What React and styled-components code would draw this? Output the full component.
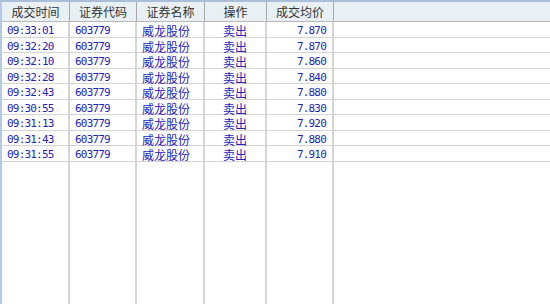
import React from "react";
import styled, { createGlobalStyle } from "styled-components";

const Global = createGlobalStyle`
  html, body { margin: 0; padding: 0; background: #fff; }
  body { font-family: "Noto Sans CJK SC", "DejaVu Sans", sans-serif; }
`;

const COLS = "68px 67px 68px 62px 67px 1fr";

const Frame = styled.div`
  width: 550px;
  height: 304px;
  box-sizing: border-box;
  border-top: 2px solid #aabdd9;
  border-left: 2px solid #b6c8e6;
  display: flex;
  flex-direction: column;
  overflow: hidden;
  background: #fff;
`;

const HeaderRow = styled.div`
  display: grid;
  grid-template-columns: ${COLS};
  height: 20px;
  box-sizing: border-box;
  background: #e8f0f4;
  border-bottom: 1px solid #b8b8b8;
  flex: none;
`;

const HeadCell = styled.div`
  box-sizing: border-box;
  border-right: ${(p) => (p.$last ? "none" : "1px solid #a8a8a8")};
  font-size: 12px;
  line-height: 19px;
  color: #333;
  text-align: center;
  white-space: nowrap;
`;

const Row = styled.div`
  display: grid;
  grid-template-columns: ${COLS};
  height: 15.55px;
  box-sizing: border-box;
  border-bottom: 1px solid #d4d4d4;
  flex: none;
`;

const Cell = styled.div`
  box-sizing: border-box;
  border-right: ${(p) => (p.$last ? "none" : "2px solid #d6d6d6")};
  color: #2424bd;
  font-size: ${(p) => (p.$mono ? "11px" : "12px")};
  font-family: ${(p) =>
    p.$mono
      ? '"DejaVu Sans Mono", "Liberation Mono", monospace'
      : '"Noto Sans CJK SC", sans-serif'};
  letter-spacing: ${(p) => (p.$mono ? "-0.8px" : "0")};
  line-height: 15px;
  height: 14.55px;
  padding-top: 1px;
  padding-left: ${(p) => (p.$align ? "0" : "5px")};
  padding-right: ${(p) => (p.$align === "right" ? "6px" : "0")};
  text-align: ${(p) => p.$align || "left"};
  white-space: nowrap;
`;

const Filler = styled.div`
  flex: 1;
  display: grid;
  grid-template-columns: ${COLS};
`;

const FillCell = styled.div`
  box-sizing: border-box;
  border-right: ${(p) => (p.$last ? "none" : "2px solid #d6d6d6")};
`;

const headers = ["成交时间", "证券代码", "证券名称", "操作", "成交均价", ""];

const rows = [
  ["09:33:01", "7.870"],
  ["09:32:20", "7.870"],
  ["09:32:10", "7.860"],
  ["09:32:28", "7.840"],
  ["09:32:43", "7.880"],
  ["09:30:55", "7.830"],
  ["09:31:13", "7.920"],
  ["09:31:43", "7.880"],
  ["09:31:55", "7.910"],
];

export default function App() {
  return (
    <>
      <Global />
      <Frame>
        <HeaderRow>
          {headers.map((h, i) => (
            <HeadCell key={i} $last={i === headers.length - 1}>
              {h}
            </HeadCell>
          ))}
        </HeaderRow>
        {rows.map(([t, p], i) => (
          <Row key={i}>
            <Cell $mono>{t}</Cell>
            <Cell $mono>603779</Cell>
            <Cell>威龙股份</Cell>
            <Cell $align="center">卖出</Cell>
            <Cell $mono $align="right">{p}</Cell>
            <Cell $last />
          </Row>
        ))}
        <Filler>
          {[0, 1, 2, 3, 4, 5].map((i) => (
            <FillCell key={i} $last={i === 5} />
          ))}
        </Filler>
      </Frame>
    </>
  );
}
